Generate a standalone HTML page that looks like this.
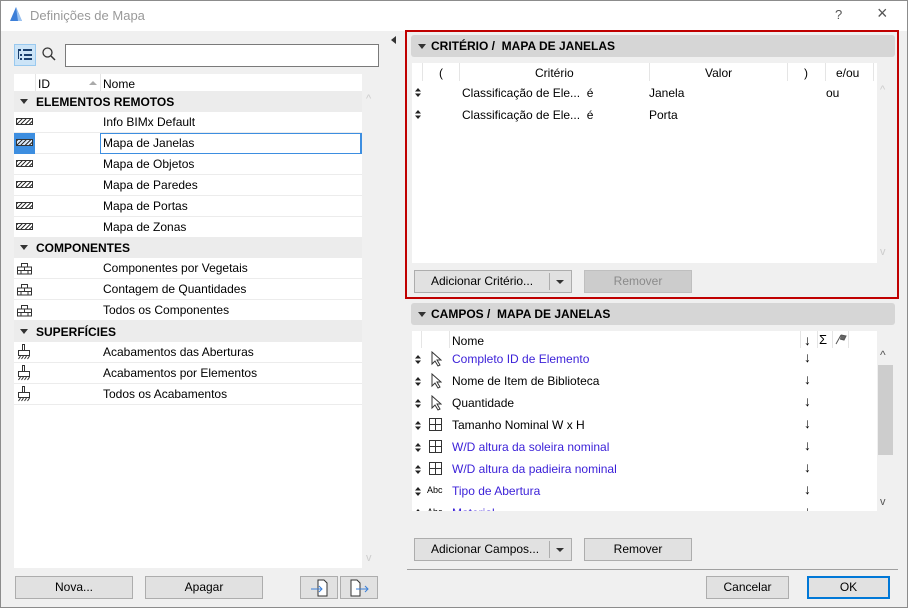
<!DOCTYPE html>
<html><head><meta charset="utf-8"><style>
*{box-sizing:border-box;margin:0;padding:0}
body{width:908px;height:608px;overflow:hidden;background:#f0f0f0;font-family:"Liberation Sans",sans-serif;font-size:12px;color:#000;position:relative}
.a{position:absolute}
.win{left:0;top:0;width:908px;height:608px;border:1px solid #8c8c8c}
.title{left:1px;top:1px;width:906px;height:30px;background:#fff}
.btn{position:absolute;background:#e1e1e1;border:1px solid #adadad;text-align:center;line-height:20px;height:23px}
.row{position:absolute;left:14px;width:348px;height:21px;background:#fff;border-bottom:1px solid #ececec}
.row span{position:absolute;left:89px;top:3px}
.grp{position:absolute;left:14px;width:348px;height:21px;background:#ececec;font-weight:bold}
.grp span{position:absolute;left:22px;top:4px}
.tri{position:absolute;left:6px;top:8px;border-left:4px solid transparent;border-right:4px solid transparent;border-top:5px solid #333}
.hatch{position:absolute;left:2px;top:6px;width:17px;height:7px;border:1px solid #333;background:repeating-linear-gradient(135deg,#333 0 1px,#fff 1px 3px)}
.ph{position:absolute;left:411px;width:484px;height:22px;background:#d6d6d6;border-radius:3px;font-weight:bold}
.ph span{position:absolute;left:20px;top:4px}
.ph i{position:absolute;left:7px;top:9px;border-left:4px solid transparent;border-right:4px solid transparent;border-top:5px solid #333}
.cr{position:absolute;left:412px;width:465px;height:22px}
.cr .t{position:absolute;left:40px;top:4px}
.blue{color:#3a1fd8}
</style></head><body>
<svg width="0" height="0" style="position:absolute"><defs>
<g id="br"><path d="M5.5 0.5h6v3.5h-6z M1.5 4h14v3.5h-14z M1.5 7.5h14v3.5h-14z M8.5 4v3.5 M5 7.5v3.5 M12 7.5v3.5" fill="none" stroke="#333" stroke-width="1"/></g>
<g id="bs"><path d="M6.5 0.5h2v6h-2z M2.5 6.5h11v5h-11z M2.5 11.5h11" fill="none" stroke="#333"/><path d="M2.5 15l2-3M5.5 15l2-3M8.5 15l2-3M11.5 15l2-3" stroke="#333"/></g>
<g id="ud"><path d="M0 3.5L3 0L6 3.5Z M0 5.5L3 9L6 5.5Z" fill="#222"/></g>
</defs></svg>
<div class="a win"></div>
<div class="a title"></div>
<svg class="a" style="left:9px;top:6px" width="14" height="16"><path d="M1 15 L7 1 L13 15 Z" fill="#3d7fd8"/><path d="M7 1 L13 15 L9 15 Z" fill="#9cc3f0"/></svg>
<div class="a" style="left:30px;top:8px;color:#999;font-size:13px">Definições de Mapa</div>
<div class="a" style="left:835px;top:7px;color:#555;font-size:13px">?</div>
<div class="a" style="left:877px;top:3px;color:#555;font-size:18px">×</div>

<div class="a" style="left:14px;top:44px;width:22px;height:22px;background:#cce4f7;border:1px solid #99c9ef"></div>
<svg class="a" style="left:17px;top:48px" width="16" height="14"><g fill="#1a3f6e"><rect x="1" y="1" width="3" height="2"/><rect x="6" y="1" width="9" height="2"/><rect x="3" y="6" width="2" height="2"/><rect x="7" y="6" width="8" height="2"/><rect x="3" y="10" width="2" height="2"/><rect x="7" y="10" width="8" height="2"/><rect x="1" y="3" width="1" height="8"/></g></svg>
<svg class="a" style="left:41px;top:46px" width="16" height="16"><circle cx="6.5" cy="6.5" r="4.5" fill="none" stroke="#333" stroke-width="1.3"/><path d="M10 10 L14 14" stroke="#333" stroke-width="1.5"/></svg>
<div class="a" style="left:65px;top:44px;width:314px;height:23px;background:#fff;border:1px solid #7a7a7a"></div>

<div class="a" style="left:14px;top:74px;width:348px;height:494px;background:#fff"></div>
<div class="a" style="left:35px;top:74px;width:1px;height:17px;background:#e5e5e5"></div>
<div class="a" style="left:100px;top:74px;width:1px;height:17px;background:#e5e5e5"></div>
<div class="a" style="left:38px;top:77px">ID</div>
<div class="a" style="left:89px;top:81px;border-left:4px solid transparent;border-right:4px solid transparent;border-bottom:4px solid #aaa"></div>
<div class="a" style="left:103px;top:77px">Nome</div>

<div class="grp" style="top:91px"><div class="tri"></div><span>ELEMENTOS REMOTOS</span></div>
<div class="row" style="top:112px"><div class="hatch"></div><span>Info BIMx Default</span></div>
<div class="row" style="top:133px"><div class="a" style="left:0;top:0;width:21px;height:21px;background:#3d8ee0"></div><div class="hatch" style="background:repeating-linear-gradient(135deg,#333 0 1px,#dbe8f7 1px 3px)"></div><div class="a" style="left:86px;top:0;width:262px;height:21px;border:1px solid #3d8ee0;border-right-width:2px"></div><span>Mapa de Janelas</span></div>
<div class="row" style="top:154px"><div class="hatch"></div><span>Mapa de Objetos</span></div>
<div class="row" style="top:175px"><div class="hatch"></div><span>Mapa de Paredes</span></div>
<div class="row" style="top:196px"><div class="hatch"></div><span>Mapa de Portas</span></div>
<div class="row" style="top:217px"><div class="hatch"></div><span>Mapa de Zonas</span></div>
<div class="grp" style="top:237px"><div class="tri"></div><span>COMPONENTES</span></div>
<div class="row" style="top:258px"><svg class="a" style="left:2px;top:5px" width="17" height="12"><use href="#br"/></svg><span>Componentes por Vegetais</span></div>
<div class="row" style="top:279px"><svg class="a" style="left:2px;top:5px" width="17" height="12"><use href="#br"/></svg><span>Contagem de Quantidades</span></div>
<div class="row" style="top:300px"><svg class="a" style="left:2px;top:5px" width="17" height="12"><use href="#br"/></svg><span>Todos os Componentes</span></div>
<div class="grp" style="top:321px"><div class="tri"></div><span>SUPERFÍCIES</span></div>
<div class="row" style="top:342px"><svg class="a" style="left:2px;top:2px" width="16" height="17"><use href="#bs"/></svg><span>Acabamentos das Aberturas</span></div>
<div class="row" style="top:363px"><svg class="a" style="left:2px;top:2px" width="16" height="17"><use href="#bs"/></svg><span>Acabamentos por Elementos</span></div>
<div class="row" style="top:384px"><svg class="a" style="left:2px;top:2px" width="16" height="17"><use href="#bs"/></svg><span>Todos os Acabamentos</span></div>
<div class="a" style="left:366px;top:93px;color:#ccc;font-size:11px">^</div>
<div class="a" style="left:366px;top:552px;color:#ccc;font-size:11px">v</div>

<div class="btn" style="left:15px;top:576px;width:118px">Nova...</div>
<div class="btn" style="left:145px;top:576px;width:118px">Apagar</div>
<div class="btn" style="left:300px;top:576px;width:38px"></div>
<div class="btn" style="left:340px;top:576px;width:38px"></div>
<svg class="a" style="left:309px;top:578px" width="22" height="20"><path d="M9 2h6l3 3v13H9z" fill="#fff" stroke="#333"/><path d="M2 11h11M10 8l3 3-3 3" stroke="#3a7fd8" fill="none"/></svg>
<svg class="a" style="left:348px;top:578px" width="22" height="20"><path d="M3 2h6l3 3v13H3z" fill="#fff" stroke="#333"/><path d="M8 11h12M17 8l3 3-3 3" stroke="#3a7fd8" fill="none"/></svg>

<div class="a" style="left:391px;top:36px;border-top:4px solid transparent;border-bottom:4px solid transparent;border-right:5px solid #333"></div>

<div class="a" style="left:405px;top:30px;width:494px;height:269px;border:2px solid #c00000"></div>
<div class="ph" style="top:35px"><i></i><span>CRITÉRIO /&nbsp; MAPA DE JANELAS</span></div>
<div class="a" style="left:412px;top:63px;width:465px;height:200px;background:#fff"></div>
<div class="a" style="left:422px;top:63px;width:1px;height:18px;background:#e5e5e5"></div>
<div class="a" style="left:459px;top:63px;width:1px;height:18px;background:#e5e5e5"></div>
<div class="a" style="left:649px;top:63px;width:1px;height:18px;background:#e5e5e5"></div>
<div class="a" style="left:787px;top:63px;width:1px;height:18px;background:#e5e5e5"></div>
<div class="a" style="left:825px;top:63px;width:1px;height:18px;background:#e5e5e5"></div>
<div class="a" style="left:873px;top:63px;width:1px;height:18px;background:#e5e5e5"></div>
<div class="a" style="left:439px;top:66px">(</div>
<div class="a" style="left:535px;top:66px">Critério</div>
<div class="a" style="left:705px;top:66px">Valor</div>
<div class="a" style="left:804px;top:66px">)</div>
<div class="a" style="left:836px;top:66px">e/ou</div>
<svg class="a" style="left:415px;top:88px" width="6" height="9"><use href="#ud"/></svg>
<div class="a" style="left:462px;top:86px">Classificação de Ele...&nbsp; é</div>
<div class="a" style="left:649px;top:86px">Janela</div>
<div class="a" style="left:826px;top:86px">ou</div>
<svg class="a" style="left:415px;top:110px" width="6" height="9"><use href="#ud"/></svg>
<div class="a" style="left:462px;top:108px">Classificação de Ele...&nbsp; é</div>
<div class="a" style="left:649px;top:108px">Porta</div>
<div class="a" style="left:880px;top:84px;color:#ccc;font-size:11px">^</div>
<div class="a" style="left:880px;top:246px;color:#ccc;font-size:11px">v</div>
<div class="btn" style="left:414px;top:270px;width:158px;text-align:left;padding-left:16px">Adicionar Critério...</div>
<div class="a" style="left:549px;top:273px;width:1px;height:17px;background:#adadad"></div>
<div class="a" style="left:556px;top:280px;border-left:4px solid transparent;border-right:4px solid transparent;border-top:4px solid #333"></div>
<div class="btn" style="left:584px;top:270px;width:108px;background:#ccc;border-color:#bfbfbf;color:#8a8a8a">Remover</div>

<div class="ph" style="top:303px"><i></i><span>CAMPOS /&nbsp; MAPA DE JANELAS</span></div>
<div class="a" style="left:412px;top:331px;width:465px;height:180px;background:#fff;overflow:hidden">
 <div class="a" style="left:9px;top:0;width:1px;height:17px;background:#e5e5e5"></div>
 <div class="a" style="left:37px;top:0;width:1px;height:17px;background:#e5e5e5"></div>
 <div class="a" style="left:388px;top:0;width:1px;height:17px;background:#e5e5e5"></div>
 <div class="a" style="left:405px;top:0;width:1px;height:17px;background:#e5e5e5"></div>
 <div class="a" style="left:420px;top:0;width:1px;height:17px;background:#e5e5e5"></div>
 <div class="a" style="left:436px;top:0;width:1px;height:17px;background:#e5e5e5"></div>
 <div class="a" style="left:40px;top:3px">Nome</div>
 <div class="a" style="left:392px;top:1px;font-size:14px">↓</div>
 <div class="a" style="left:407px;top:1px;font-size:13px">Σ</div>
 <svg class="a" style="left:423px;top:2px" width="12" height="12"><path d="M1 11L6 2 M6 2l5 1-2 4-4-1" stroke="#555" fill="#666"/></svg>
 <div class="cr" style="left:0;top:17px"><svg class="a" style="left:3px;top:7px" width="6" height="9"><use href="#ud"/></svg><svg class="a" style="left:18px;top:3px" width="12" height="16"><path d="M2 1v12l3-3 3 5 2-1-3-5h4z" fill="#fff" stroke="#333"/></svg><span class="t blue">Completo ID de Elemento</span><span class="a" style="left:392px;top:1px;font-size:14px">↓</span></div>
 <div class="cr" style="left:0;top:39px"><svg class="a" style="left:3px;top:7px" width="6" height="9"><use href="#ud"/></svg><svg class="a" style="left:18px;top:3px" width="12" height="16"><path d="M2 1v12l3-3 3 5 2-1-3-5h4z" fill="#fff" stroke="#333"/></svg><span class="t">Nome de Item de Biblioteca</span><span class="a" style="left:392px;top:1px;font-size:14px">↓</span></div>
 <div class="cr" style="left:0;top:61px"><svg class="a" style="left:3px;top:7px" width="6" height="9"><use href="#ud"/></svg><svg class="a" style="left:18px;top:3px" width="12" height="16"><path d="M2 1v12l3-3 3 5 2-1-3-5h4z" fill="#fff" stroke="#333"/></svg><span class="t">Quantidade</span><span class="a" style="left:392px;top:1px;font-size:14px">↓</span></div>
 <div class="cr" style="left:0;top:83px"><svg class="a" style="left:3px;top:7px" width="6" height="9"><use href="#ud"/></svg><svg class="a" style="left:16px;top:3px" width="16" height="15"><path d="M1.5 1.5h12v12h-12z M1.5 7.5h12 M7.5 1.5v12" fill="none" stroke="#333"/></svg><span class="t">Tamanho Nominal W x H</span><span class="a" style="left:392px;top:1px;font-size:14px">↓</span></div>
 <div class="cr" style="left:0;top:105px"><svg class="a" style="left:3px;top:7px" width="6" height="9"><use href="#ud"/></svg><svg class="a" style="left:16px;top:3px" width="16" height="15"><path d="M1.5 1.5h12v12h-12z M1.5 7.5h12 M7.5 1.5v12" fill="none" stroke="#333"/></svg><span class="t blue">W/D altura da soleira nominal</span><span class="a" style="left:392px;top:1px;font-size:14px">↓</span></div>
 <div class="cr" style="left:0;top:127px"><svg class="a" style="left:3px;top:7px" width="6" height="9"><use href="#ud"/></svg><svg class="a" style="left:16px;top:3px" width="16" height="15"><path d="M1.5 1.5h12v12h-12z M1.5 7.5h12 M7.5 1.5v12" fill="none" stroke="#333"/></svg><span class="t blue">W/D altura da padieira nominal</span><span class="a" style="left:392px;top:1px;font-size:14px">↓</span></div>
 <div class="cr" style="left:0;top:149px"><svg class="a" style="left:3px;top:7px" width="6" height="9"><use href="#ud"/></svg><span class="a" style="left:15px;top:5px;font-size:9px">Abc</span><span class="t blue">Tipo de Abertura</span><span class="a" style="left:392px;top:1px;font-size:14px">↓</span></div>
 <div class="cr" style="left:0;top:171px"><svg class="a" style="left:3px;top:7px" width="6" height="9"><use href="#ud"/></svg><span class="a" style="left:15px;top:5px;font-size:9px">Abc</span><span class="t blue">Material</span><span class="a" style="left:392px;top:1px;font-size:14px">↓</span></div>
</div>
<div class="a" style="left:878px;top:365px;width:15px;height:90px;background:#cdcdcd"></div>
<div class="a" style="left:880px;top:348px;font-size:12px;color:#555">^</div>
<div class="a" style="left:880px;top:496px;font-size:11px;color:#555">v</div>
<div class="btn" style="left:414px;top:538px;width:158px;text-align:left;padding-left:16px">Adicionar Campos...</div>
<div class="a" style="left:549px;top:541px;width:1px;height:17px;background:#adadad"></div>
<div class="a" style="left:556px;top:548px;border-left:4px solid transparent;border-right:4px solid transparent;border-top:4px solid #333"></div>
<div class="btn" style="left:584px;top:538px;width:108px">Remover</div>
<div class="a" style="left:407px;top:569px;width:491px;height:1px;background:#a0a0a0"></div>
<div class="btn" style="left:706px;top:576px;width:83px">Cancelar</div>
<div class="btn" style="left:807px;top:576px;width:83px;border:2px solid #0078d7;line-height:19px">OK</div>
</body></html>
